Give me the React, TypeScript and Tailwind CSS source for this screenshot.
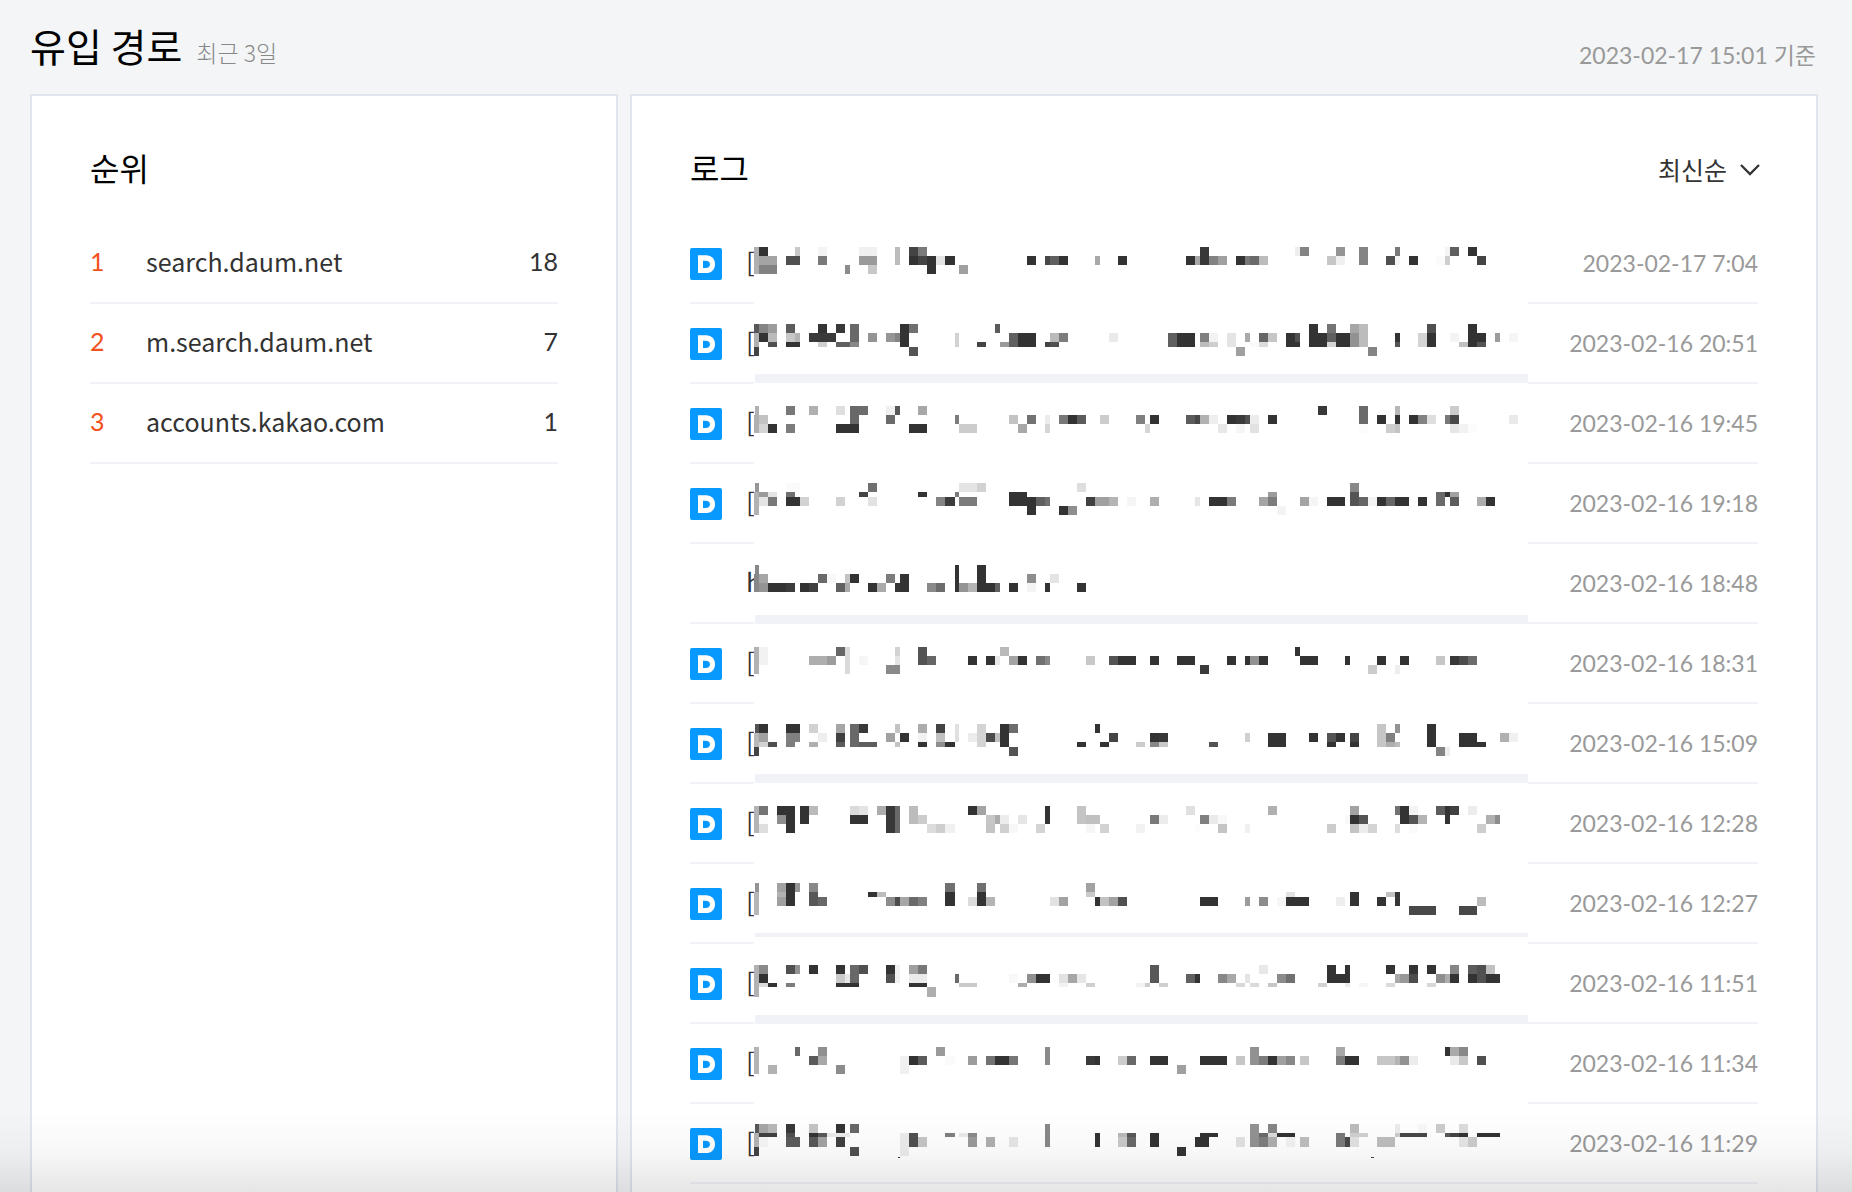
import React from "react";

/*
 * A redacted title is a mosaic of grey cells. Units are thirds of a pixel.
 * levels: horizontal cuts of the mosaic. Each cell is
 * "x1 x2 ab gg": x range, from level a to level b, grey value gg.
 * left and right are the two halves of the strip.
 */
type Entry = {
  time: string;
  first: string;
  icon: boolean;
  levels: number[];
  band?: [number, number];
  left: string;
  right: string;
};

const entries: Entry[] = [
  {
    time: "2023-02-17 7:04", first: "[", icon: true, levels: [51, 78, 105, 132],
    left: "222 237 03 b0,237 264 01 33,237 291 12 a4,237 291 23 82,345 360 01 c8,318 360 12 50,414 441 01 f4,414 441 12 7a,495 510 23 8c,537 591 01 f0,537 591 12 9a,564 591 23 c8,645 660 02 bc,687 714 01 44,714 741 01 7a,687 714 12 33,714 741 12 44,741 768 13 33,768 795 12 e4,795 825 12 33,837 864 23 a0,1041 1068 12 33,1095 1110 12 48,1110 1137 12 60,1137 1164 12 33,1245 1260 12 a8",
    right: "54 81 12 33,258 285 12 33,285 300 12 a8,300 327 02 38,327 354 12 82,354 381 12 a0,408 435 12 33,435 450 12 78,450 477 12 6a,477 504 12 bc,585 600 01 ee,600 627 01 84,681 708 12 c6,708 735 01 94,708 735 12 f0,777 804 02 84,858 885 12 50,885 900 01 78,885 900 12 f5,927 954 12 33,1008 1035 12 fa,1035 1050 01 f4,1035 1050 12 ce,1050 1077 01 60,1104 1131 01 33,1131 1158 12 44",
  },
  {
    time: "2023-02-16 20:51", first: "[", icon: true, levels: [42, 69, 96, 111, 138], band: [192, 219],
    left: "222 237 01 58,222 237 13 b0,222 237 34 44,237 264 01 84,264 291 01 9c,237 264 12 33,264 291 12 ba,264 291 23 50,318 345 01 5c,318 345 12 c8,345 360 12 b4,318 360 23 33,414 441 01 33,387 468 12 3a,414 441 23 d0,468 495 01 38,510 537 02 68,468 510 23 60,510 537 23 88,564 591 12 94,618 645 12 96,645 660 12 84,660 687 03 33,687 714 01 70,687 714 34 54,825 837 13 d2,891 918 23 44,945 960 01 5c,960 987 23 9a,987 1014 13 60,1014 1068 13 33,1095 1110 23 44,1110 1137 12 ba,1110 1137 23 50,1137 1164 12 7c",
    right: "27 54 12 ea,204 231 13 60,231 285 13 33,300 327 12 80,327 354 12 f2,300 327 23 bc,327 354 23 ce,381 408 13 e4,408 435 34 a0,435 450 12 aa,450 477 23 fa,477 504 12 66,504 531 12 c6,477 504 23 dc,558 585 13 33,585 600 12 50,585 600 23 33,627 654 01 33,627 681 13 33,681 708 01 74,681 708 12 60,681 708 23 d4,708 750 13 33,750 777 01 a6,750 777 13 92,777 804 03 bc,804 831 34 84,885 900 12 33,885 900 23 54,954 981 13 d4,981 1008 01 50,981 1008 13 33,1050 1077 12 f4,1077 1104 23 c0,1104 1131 03 33,1131 1158 12 33,1131 1158 23 54,1185 1200 12 9c,1227 1254 12 f6",
  },
  {
    time: "2023-02-16 19:45", first: "[", icon: true, levels: [48, 75, 102, 129],
    left: "225 237 01 b0,222 237 13 b0,237 264 12 c2,237 264 23 d4,264 291 23 33,318 345 01 78,318 345 23 7c,387 414 01 b0,468 495 01 de,510 537 02 68,537 564 01 6c,468 537 23 33,618 645 01 f0,645 660 01 58,618 645 12 6a,714 741 01 a8,687 741 23 33,825 837 12 7c,837 891 23 cc,987 1014 12 c4,1014 1041 23 a8,1041 1068 12 72,1095 1110 12 ec,1095 1110 23 d6,1137 1164 12 78,1164 1191 12 33,1191 1218 12 5c",
    right: "0 27 12 cc,108 135 12 80,135 150 23 d6,150 177 12 33,258 285 12 5c,285 300 12 48,300 327 12 b2,327 354 12 ee,354 381 23 e8,381 408 12 33,408 435 12 3a,435 450 12 50,450 477 12 ec,408 435 23 f6,450 477 23 e2,504 531 12 33,654 681 01 38,777 804 02 6a,777 804 23 fc,831 858 12 33,858 885 23 ce,885 900 01 b8,885 900 12 33,885 900 23 c4,927 954 12 33,954 981 12 82,981 1008 12 de,1035 1050 12 78,1050 1077 01 cc,1050 1077 12 48,1050 1077 23 e6,1077 1104 23 f2,1104 1131 23 fc,1227 1254 12 ea",
  },
  {
    time: "2023-02-16 19:18", first: "[", icon: true, levels: [39, 66, 81, 108, 135],
    left: "225 237 01 96,222 237 14 b2,237 264 12 9a,264 291 12 e4,237 264 23 e4,264 291 23 78,318 360 01 fa,318 345 12 70,318 360 23 33,360 387 23 d2,468 495 23 d2,537 564 12 44,564 591 01 70,564 591 23 e2,714 741 12 33,768 795 23 84,795 825 23 3c,825 837 12 7a,837 891 01 e4,891 918 01 d2,837 891 23 7c,987 1041 13 33,1041 1068 24 33,1068 1095 23 60,1095 1110 23 70,1137 1164 34 33,1164 1191 34 8e,1191 1218 01 de,1218 1245 23 40,1245 1260 23 a0",
    right: "0 27 23 a0,27 54 23 b4,81 108 23 f5,150 177 23 ae,285 300 23 e6,327 381 23 33,381 408 23 7a,477 504 23 a4,504 531 12 9c,504 531 23 7c,531 558 34 f4,600 627 23 a4,627 654 23 f5,681 735 23 33,750 777 01 88,750 777 13 54,777 804 23 66,804 831 23 f2,831 858 23 33,858 885 23 66,885 927 23 33,954 981 23 33,1008 1035 13 6a,1035 1050 12 33,1050 1077 12 a2,1050 1077 23 5c,1131 1158 23 ac,1158 1185 23 33",
  },
  {
    time: "2023-02-16 18:48", first: "h", icon: false, levels: [45, 72, 99, 126], band: [195, 222],
    left: "225 237 01 88,222 237 13 88,237 264 12 a6,237 264 23 94,264 318 23 33,318 345 23 3c,360 387 23 33,387 414 23 40,414 441 12 6a,441 468 12 f8,468 495 23 60,495 510 12 c4,495 510 23 aa,510 537 12 33,564 591 23 33,591 618 23 aa,618 645 12 7c,645 660 23 38,660 687 13 33,741 768 23 8a,768 795 23 6c,825 837 03 33,837 864 23 94,864 891 23 b4,891 918 03 33,918 945 23 33,945 960 23 60,987 1014 23 33,1041 1068 12 8e,1041 1068 23 f4,1095 1110 23 33,1110 1137 12 e4,1191 1218 23 33",
    right: "",
  },
  {
    time: "2023-02-16 18:31", first: "[", icon: true, levels: [51, 78, 105, 132],
    left: "222 237 03 b2,237 264 02 f2,387 441 12 ae,441 468 12 9c,468 495 01 66,495 510 03 da,537 564 12 f6,645 660 01 d2,645 660 12 e4,618 660 23 8a,714 741 02 54,741 768 12 66,864 891 12 33,918 945 12 33,945 960 12 ea,960 987 01 ba,987 1014 12 a4,1014 1041 12 33,1068 1095 12 70,1095 1110 12 88,1218 1245 12 c8",
    right: "27 54 12 54,54 108 12 33,150 177 12 33,231 285 12 33,300 327 23 3a,381 408 12 33,435 450 12 33,450 477 12 92,477 504 12 33,585 600 01 33,600 654 12 33,735 750 12 33,804 831 23 cc,831 858 12 33,885 900 23 ee,900 927 12 33,1008 1035 12 c6,1050 1077 12 38,1077 1104 12 4c,1104 1131 12 6c",
  },
  {
    time: "2023-02-16 15:09", first: "[", icon: true, levels: [42, 69, 96, 111, 138], band: [192, 219],
    left: "225 237 01 54,222 237 13 b8,222 237 34 44,237 264 01 33,237 264 12 a0,237 264 23 d2,264 291 23 50,318 360 01 33,318 360 12 80,318 345 23 7c,387 414 01 d2,414 441 12 ee,387 414 23 b0,468 495 01 a6,468 495 12 40,468 495 23 5c,510 537 03 68,537 564 01 38,537 591 23 5e,618 645 12 a2,645 660 01 c4,645 660 23 c4,660 687 12 33,714 741 01 ac,714 741 12 f2,714 741 23 33,768 795 01 44,768 795 12 c0,768 795 23 8e,795 825 23 33,825 837 02 e0,864 891 12 ec,891 918 03 d4,918 945 12 4c,945 960 12 c0,960 987 03 33,987 1014 01 6c,987 1014 34 54,1191 1218 23 33,1245 1260 01 33",
    right: "0 27 23 33,27 54 12 44,108 135 23 cc,150 177 12 33,177 204 12 38,150 177 23 88,177 204 23 c8,327 354 23 54,435 450 12 d0,504 558 13 33,627 654 12 33,681 708 12 54,708 735 12 33,681 708 23 33,750 777 12 44,750 777 23 33,831 858 03 c6,858 885 12 80,885 900 01 92,858 885 23 ae,885 900 23 bc,981 1008 03 33,1008 1035 34 84,1035 1050 34 ee,1077 1131 13 33,1131 1158 23 33,1200 1227 12 b0,1227 1254 12 f0",
  },
  {
    time: "2023-02-16 12:28", first: "[", icon: true, levels: [48, 75, 102, 129],
    left: "222 237 03 b4,237 264 01 74,237 264 12 fc,237 264 23 de,291 318 01 33,291 318 12 8e,318 345 03 33,360 387 02 33,387 414 01 ba,510 537 01 da,537 564 01 e4,510 564 12 33,591 618 01 ac,618 645 03 38,645 660 03 68,687 714 02 bc,714 741 12 cc,741 768 23 dc,768 795 23 ce,795 825 23 f0,864 891 01 33,891 918 01 a4,918 945 12 c6,945 960 12 ac,960 987 12 ec,918 945 23 c4,960 987 23 d0,987 1014 23 f8,1014 1041 12 e6,1068 1095 23 d4,1095 1110 02 33,1191 1218 02 c4,1218 1260 12 c0,1218 1245 23 f6",
    right: "0 27 23 d2,108 135 23 f2,150 177 12 7a,177 204 12 ec,258 285 01 e0,285 300 23 fc,300 327 12 80,327 354 12 ea,354 381 12 f8,354 381 23 c4,435 450 23 f0,504 531 01 b0,681 708 23 cc,735 750 12 f8,750 777 01 a2,750 777 12 33,777 804 12 54,750 777 23 c4,777 804 23 ec,804 831 23 d4,885 900 01 72,900 927 02 33,927 954 01 f4,927 954 12 54,954 981 12 b4,885 900 23 de,927 954 23 fa,1008 1035 01 5c,1035 1050 02 33,1050 1077 01 40,1104 1131 01 ec,1131 1158 23 ce,1158 1185 12 b0,1185 1200 12 8c",
  },
  {
    time: "2023-02-16 12:27", first: "[", icon: true, levels: [39, 66, 81, 108, 135], band: [189, 201],
    left: "225 237 01 94,222 237 14 b6,291 318 01 a2,291 318 12 b2,291 318 23 a0,318 345 03 33,345 360 01 96,387 414 01 88,387 414 13 58,414 441 23 68,564 591 12 33,591 618 12 bc,618 645 23 8c,645 660 23 4c,660 687 23 a6,687 714 23 6a,714 741 23 80,795 825 01 70,795 825 13 33,864 891 23 dc,891 918 01 70,891 918 13 33,918 945 23 b4,1110 1137 23 e2,1137 1164 23 a2,1218 1245 01 a2,1218 1245 12 ca,1245 1260 23 33",
    right: "0 27 23 c2,27 54 23 a2,54 81 23 50,300 354 23 33,435 450 23 9c,477 504 23 8c,531 558 23 f6,558 585 12 e2,558 627 23 33,708 735 23 ee,750 777 13 33,831 858 23 33,858 885 12 c2,885 900 13 36,927 1008 34 48,1077 1131 34 48,1131 1158 23 bc",
  },
  {
    time: "2023-02-16 11:51", first: "[", icon: true, levels: [45, 72, 99, 111, 141], band: [195, 222],
    left: "222 237 04 b2,237 264 01 8a,237 264 12 33,237 264 23 dc,264 291 23 33,318 345 01 50,345 360 01 92,318 345 23 7c,387 414 01 33,468 495 01 33,468 495 12 ca,495 510 12 e6,510 537 02 68,537 564 01 50,468 537 23 33,618 645 01 33,618 645 12 50,645 660 02 f0,687 714 01 a0,714 741 01 78,687 741 12 ea,687 741 23 33,741 768 34 ae,825 837 12 6a,837 891 23 ca,987 1014 12 f8,1014 1041 23 ac,1041 1068 12 90,1068 1110 12 33,1137 1164 12 e2,1164 1191 12 a6,1191 1218 12 e6,1137 1164 23 f2,1218 1245 23 d0",
    right: "108 135 23 f2,135 150 23 ce,150 177 02 58,177 204 23 ce,258 285 12 60,285 300 12 33,354 381 12 88,381 408 12 a8,408 435 23 d8,435 450 12 e4,450 477 23 da,477 504 01 e8,504 531 23 c6,531 558 12 8c,558 585 12 70,654 681 23 d2,681 708 01 33,735 750 01 33,681 750 12 33,735 750 23 ec,777 804 23 f6,858 885 01 33,885 900 12 a8,900 927 12 98,927 954 01 33,927 954 12 4c,858 885 23 da,981 1008 01 33,981 1008 23 d8,1008 1035 12 8e,1035 1050 12 ac,1050 1077 01 86,1050 1077 12 33,1104 1131 01 5c,1131 1158 02 50,1158 1185 01 c2,1104 1131 12 33,1158 1200 12 33",
  },
  {
    time: "2023-02-16 11:34", first: "[", icon: true, levels: [51, 78, 105, 132],
    left: "222 237 03 b4,264 291 23 b2,345 360 01 68,387 414 12 5a,414 441 01 90,414 441 12 a8,468 495 23 8c,660 687 13 f0,687 714 12 33,714 741 12 5c,768 795 01 9a,795 825 12 fa,864 891 12 9c,918 945 12 72,945 987 12 33,987 1014 12 76,1095 1110 02 8a,1218 1245 12 3a,1245 1260 12 33",
    right: "54 81 12 cc,81 108 12 68,150 204 12 33,231 258 23 a0,300 381 12 33,408 435 12 c6,450 477 02 92,477 504 12 7c,504 531 12 33,531 558 12 a0,558 585 12 88,600 627 12 c6,708 735 01 a8,708 735 12 7c,735 777 12 33,831 885 12 c6,885 900 12 b4,900 927 12 92,927 954 12 ec,1035 1050 01 33,1050 1077 01 aa,1077 1104 01 88,1050 1077 12 ea,1077 1104 12 c8,1131 1158 12 50",
  },
  {
    time: "2023-02-16 11:29", first: "[", icon: true, levels: [42, 69, 81, 111, 138, 141, 144],
    left: "225 237 01 58,222 237 13 b4,222 237 34 44,237 264 01 a6,264 291 01 b8,237 291 12 40,237 264 23 f6,318 345 01 38,318 345 12 50,318 360 23 5c,387 414 01 c4,387 414 12 33,414 441 12 58,387 414 23 58,414 441 23 a2,441 510 12 ea,468 495 01 33,468 495 23 40,510 537 01 68,510 537 34 50,660 687 14 ec,687 714 13 50,714 741 23 c6,795 825 12 80,837 864 12 ea,864 891 12 8a,864 891 23 9a,918 945 23 b0,987 1014 23 e6,1095 1110 03 88,654 660 56 33,1245 1260 13 33",
    right: "54 81 12 ba,81 108 12 58,54 81 23 ca,81 108 23 68,150 177 13 33,231 258 34 33,285 327 23 33,300 354 12 33,408 435 23 e2,450 477 03 92,477 504 12 6a,477 504 23 7e,504 531 01 86,504 531 12 dc,504 531 23 ae,531 585 12 33,558 585 23 f2,600 627 23 be,708 735 13 7a,735 750 23 48,750 777 01 bc,750 804 12 d0,750 777 23 e2,831 885 23 be,885 900 01 ec,885 900 12 cc,900 981 12 48,954 981 01 f8,1008 1035 01 cc,1077 1104 01 dc,1035 1050 12 58,1050 1077 12 44,1077 1104 12 33,1077 1104 23 e6,1104 1131 23 cc,1131 1200 12 33,813 822 56 44",
  },
];

const ranks = [
  { host: "search.daum.net", count: 18 },
  { host: "m.search.daum.net", count: 7 },
  { host: "accounts.kakao.com", count: 1 },
];

function Cells({ data, levels }: { data: string; levels: number[] }) {
  if (!data) return null;
  return (
    <>
      {data.split(",").map((cell) => {
        const [x1, x2, span, grey] = cell.split(" ");
        const top = levels[Number(span[0])];
        const bottom = levels[Number(span[1])];
        return (
          <rect
            key={cell}
            x={Number(x1)}
            y={top}
            width={Number(x2) - Number(x1)}
            height={bottom - top}
            fill={`#${grey}${grey}${grey}`}
          />
        );
      })}
    </>
  );
}

function Mosaic({ entry, open }: { entry: Entry; open: boolean }) {
  return (
    <svg
      viewBox="222 -18 2322 240"
      shapeRendering="crispEdges"
      aria-hidden="true"
      className={
        open
          ? "relative -mb-[2px] h-20 w-[774px] shrink-0"
          : "relative -mb-[2px] h-20 w-[774px] shrink-0 bg-white"
      }
    >
      {entry.band && (
        <rect x={225} y={entry.band[0]} width={2319} height={entry.band[1] - entry.band[0]} fill="#f1f2f7" />
      )}
      <Cells data={entry.left} levels={entry.levels} />
      <g transform="translate(1260 0)">
        <Cells data={entry.right} levels={entry.levels} />
      </g>
    </svg>
  );
}

function DaumIcon() {
  return (
    <svg viewBox="0 0 96 96" className="size-8" role="img" aria-label="Daum">
      <rect width="96" height="96" rx="6" fill="#0899ff" />
      <path
        fill="#fff"
        fillRule="evenodd"
        d="M24 22H48C65 22 75 33 75 48.500C75 64 65 75 48 75H24ZM39 38V60H47C55 60 60 56 60 49C60 42 55 38 47 38Z"
      />
    </svg>
  );
}

export default function App() {
  return (
    <div className="relative flex min-h-screen flex-col overflow-hidden bg-[#f3f5f7] pr-[34px] pl-[30px] font-['Noto_Sans_CJK_KR',sans-serif] text-[#333]">
      <header className="flex h-[94px] items-baseline pt-[15px]">
        <h1 className="text-[39px] leading-[60px] font-normal text-black">유입 경로</h1>
        <span className="ml-[14px] text-[23px] font-light text-[#888]">최근 3일</span>
        <p className="ml-auto self-end pr-[2px] pb-[23px] font-['Lato','Noto_Sans_CJK_KR',sans-serif] text-[23px] leading-8 text-[#999]">
          2023-02-17 15:01 기준
        </p>
      </header>

      <main className="grid flex-1 grid-cols-[49fr_99fr] gap-3">
        <section className="border-2 border-b-0 border-[#dfe4ee] bg-white px-[58px]">
          <div className="flex h-32 items-center pt-[14px]">
            <h2 className="text-[32px] leading-[44px] font-normal text-black">순위</h2>
          </div>
          <ol>
            {ranks.map((r, i) => (
              <li key={r.host} className="flex h-20 items-center border-b-2 border-[#f1f2f7] pb-[3px]">
                <span className="w-14 font-['Lato',sans-serif] text-[25px] text-[#f2511b]">{i + 1}</span>
                <a href={`https://${r.host}`} className="text-[25px]">
                  {r.host}
                </a>
                <span className="ml-auto font-['Lato',sans-serif] text-[25px]">{r.count}</span>
              </li>
            ))}
          </ol>
        </section>

        <section className="border-2 border-b-0 border-[#dfe4ee] bg-white px-[58px] pb-2">
          <div className="flex h-32 items-center justify-between pt-[14px]">
            <h2 className="text-[32px] leading-[44px] font-normal text-black">로그</h2>
            <div className="relative mt-[6px]">
              <select aria-label="정렬" className="appearance-none bg-transparent pr-[30px] text-[25px]" defaultValue="최신순">
                <option>최신순</option>
              </select>
              <svg
                viewBox="0 0 20 12"
                className="pointer-events-none absolute top-1/2 -right-[2px] h-3 w-5 -translate-y-1/2"
                fill="none"
                stroke="#333"
                strokeWidth="2.300"
                aria-hidden="true"
              >
                <path d="M1 1L10 10L19 1" />
              </svg>
            </div>
          </div>
          <ul>
            {entries.map((e, i) => (
              <li key={e.time} className="flex h-20 items-center border-b-2 border-[#f1f2f7]">
                <span className="w-14 shrink-0 pt-[2px]">{e.icon && <DaumIcon />}</span>
                <span className="w-2 shrink-0 pb-[6px] text-[26px]">{e.first}</span>
                <Mosaic entry={e} open={i === entries.length - 1} />
                <time className="ml-auto font-['Lato',sans-serif] text-[23px] whitespace-nowrap text-[#999]">
                  {e.time}
                </time>
              </li>
            ))}
          </ul>
        </section>
      </main>

      <div className="pointer-events-none absolute inset-x-0 bottom-0 h-20 bg-linear-to-b from-transparent via-black/3 to-black/10" />
    </div>
  );
}
